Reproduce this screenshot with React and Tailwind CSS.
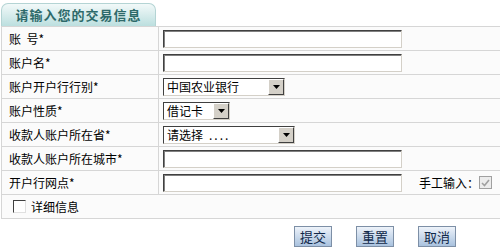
import React from "react";

const font = { fontFamily: '"Noto Sans CJK SC", "DejaVu Sans", sans-serif' };

function TextInput({ w = "w-[239px]" }) {
  return (
    <div className={`${w} h-[18px] bg-white border border-t-[#404040] border-l-[#404040] border-b-[#d4d0c8] border-r-[#d4d0c8] shadow-[inset_1px_1px_0_#808080]`} />
  );
}

function Select({ value, w, labelExtra }) {
  return (
    <div className={`${w} h-[18px] flex bg-white border border-t-[#404040] border-l-[#404040] border-b-[#d4d0c8] border-r-[#d4d0c8]`}>
      <div className="flex-1 flex items-center pl-[3px] text-[12px] leading-none text-black whitespace-nowrap overflow-hidden">
        {value}
        {labelExtra && <span className="ml-[6px] tracking-[2px]">{labelExtra}</span>}
      </div>
      <div className="w-[16px] h-full bg-[#d4d0c8] border border-t-white border-l-white border-b-[#404040] border-r-[#404040] flex items-center justify-center">
        <svg width="7" height="4" viewBox="0 0 7 4">
          <path d="M0 0h7L3.5 4z" fill="#000" />
        </svg>
      </div>
    </div>
  );
}

function Row({ label, children }) {
  return (
    <div className="grid grid-cols-[157px_1fr] h-[24px] border-b border-[#d6d6d6]">
      <div className="flex items-center pl-[7px] border-r border-[#d6d6d6] bg-[#fbfbfb] text-[12px] text-black whitespace-pre">
        {label}
      </div>
      <div className="flex items-center pl-[4px] bg-[#fbfbfb]">{children}</div>
    </div>
  );
}

function Btn({ children }) {
  return (
    <button className="w-[38px] h-[21px] border border-[#7d8fa6] bg-gradient-to-b from-[#eef3fa] to-[#a9c2de] text-[13px] text-[#10284a] leading-none">
      {children}
    </button>
  );
}

export default function App() {
  return (
    <div className="w-[500px] h-[252px] bg-white overflow-hidden" style={font}>
      <div className="h-[26px] flex items-end">
        <div className="w-[155px] h-[23px] ml-[1px] rounded-t-[7px] border border-b-0 border-[#b4d4d4] bg-gradient-to-b from-[#f2f9f9] to-[#bcdfdf] flex items-center justify-center text-[13px] font-bold text-[#2e6a6a] tracking-[1px]">
          请输入您的交易信息
        </div>
      </div>
      <div className="border-t border-l border-[#d6d6d6] ml-[1px]">
        <Row label="账  号*">
          <TextInput />
        </Row>
        <Row label="账户名*">
          <TextInput />
        </Row>
        <Row label="账户开户行行别*">
          <Select value="中国农业银行" w="w-[122px]" />
        </Row>
        <Row label="账户性质*">
          <Select value="借记卡" w="w-[67px]" />
        </Row>
        <Row label="收款人账户所在省*">
          <Select value="请选择" labelExtra="...." w="w-[132px]" />
        </Row>
        <Row label="收款人账户所在城市*">
          <TextInput />
        </Row>
        <Row label="开户行网点*">
          <TextInput />
          <span className="ml-[17px] text-[12px] text-black">手工输入：</span>
          <span className="w-[13px] h-[13px] border border-[#a0a0a0] bg-[#ececec] flex items-center justify-center">
            <svg width="9" height="8" viewBox="0 0 9 8">
              <path d="M1 4l2.5 2.5L8 1" stroke="#a0a0a0" strokeWidth="1.6" fill="none" />
            </svg>
          </span>
        </Row>
        <div className="h-[24px] flex items-center pl-[11px] border-b border-[#d6d6d6] bg-[#fbfbfb]">
          <span className="w-[13px] h-[13px] border border-t-[#404040] border-l-[#404040] border-b-[#e0e0e0] border-r-[#e0e0e0] bg-white" />
          <span className="ml-[5px] text-[12px] text-black">详细信息</span>
        </div>
      </div>
      <div className="flex justify-end gap-[24px] pr-[44px] mt-[7px]">
        <Btn>提交</Btn>
        <Btn>重置</Btn>
        <Btn>取消</Btn>
      </div>
    </div>
  );
}
